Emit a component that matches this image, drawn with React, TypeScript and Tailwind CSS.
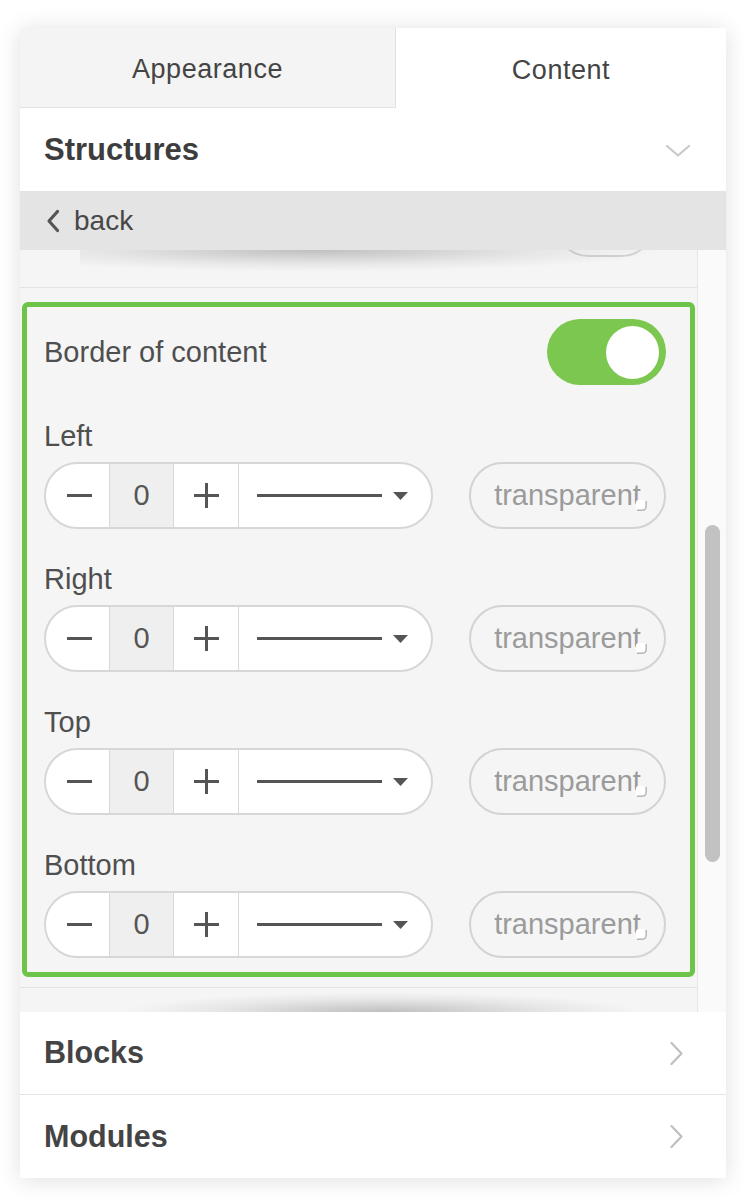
import React from "react";

function ChevronDown() {
  return (
    <svg width="26" height="14" viewBox="0 0 26 14" fill="none">
      <polyline points="2,2 13,11.5 24,2" stroke="#c9c9c9" strokeWidth="2.2" strokeLinecap="round" strokeLinejoin="round" />
    </svg>
  );
}

function ChevronRight() {
  return (
    <svg width="15" height="25" viewBox="0 0 15 25" fill="none">
      <polyline points="2.5,2 12.5,12.5 2.5,23" stroke="#bfbfbf" strokeWidth="2.2" strokeLinecap="round" strokeLinejoin="round" />
    </svg>
  );
}

function BackChevron() {
  return (
    <svg width="14" height="24" viewBox="0 0 14 24" fill="none">
      <polyline points="11.5,2.5 3,12 11.5,21.5" stroke="#555555" strokeWidth="3.2" strokeLinecap="round" strokeLinejoin="round" />
    </svg>
  );
}

function Caret() {
  return (
    <svg width="15" height="8" viewBox="0 0 15 8">
      <polygon points="0,0 15,0 7.5,8" fill="#555555" />
    </svg>
  );
}

function ResizeMark() {
  return (
    <svg width="14" height="16" viewBox="0 0 14 16" className="absolute right-[16px] bottom-[15px]">
      <rect x="2" y="4" width="9" height="10" rx="2.5" fill="#ffffff" />
      <path d="M3 14.2 H8 Q12.2 14.2 12.2 10 V5" fill="none" stroke="#b5b5b5" strokeWidth="1.4" />
    </svg>
  );
}

function BorderGroup({ label, first }: { label: string; first?: boolean }) {
  return (
    <div className={first ? "mt-[36px] flex flex-col" : "mt-[35px] flex flex-col"}>
      <div className="h-[30px] flex items-center text-[29px] leading-none text-[#4f4f4f]">{label}</div>
      <div className="mt-[11px] h-[67px] flex items-stretch justify-between">
        <div className="flex w-[389px] rounded-full border-2 border-[#d7d7d7] bg-white overflow-hidden">
          <div className="w-[64px] flex items-center justify-center border-r border-[#d9d9d9] pl-[4px]">
            <span className="block w-[25px] h-[3px] bg-[#555]" />
          </div>
          <div className="w-[64px] flex items-center justify-center border-r border-[#d9d9d9] bg-[#efefef] text-[29px] leading-none text-[#555]">
            0
          </div>
          <div className="w-[65px] flex items-center justify-center border-r border-[#d9d9d9]">
            <span className="relative block w-[25px] h-[25px]">
              <span className="absolute left-0 top-[11px] w-[25px] h-[3px] bg-[#555]" />
              <span className="absolute top-0 left-[11px] w-[3px] h-[25px] bg-[#555]" />
            </span>
          </div>
          <div className="flex-1 flex items-center pl-[18px] pr-[23px] gap-[11px]">
            <span className="flex-1 h-[3px] bg-[#555]" />
            <Caret />
          </div>
        </div>
        <div className="relative w-[197px] rounded-full border-2 border-[#d3d3d3] flex items-center justify-center text-[29px] leading-none text-[#9b9b9b]">
          transparent
          <ResizeMark />
        </div>
      </div>
    </div>
  );
}

export default function App() {
  return (
    <div className="min-h-[1200px] bg-white pt-[28px] pl-[20px] font-['Liberation_Sans',Arial,sans-serif]">
      <div className="w-[706px] h-[1150px] flex flex-col bg-white shadow-[0_2px_22px_rgba(0,0,0,0.13)]">
        {/* Tabs */}
        <div className="h-[80px] flex">
          <div className="w-[376px] flex items-center justify-center pt-[4px] bg-[#f4f4f4] border-b border-r border-[#e2e2e2] text-[27px] tracking-[0.02em] text-[#444]">
            Appearance
          </div>
          <div className="flex-1 flex items-center justify-center pt-[4px] bg-white text-[27px] tracking-[0.02em] text-[#444]">
            Content
          </div>
        </div>

        {/* Structures */}
        <div className="h-[83px] flex items-center justify-between pl-[24px] pr-[35px] pt-[2px] bg-white">
          <span className="text-[31px] font-bold text-[#3d3d3d]">Structures</span>
          <ChevronDown />
        </div>

        {/* Back bar */}
        <div className="relative z-10 h-[59px] flex items-center gap-[14px] pl-[26px] bg-[#e4e4e4]">
          <BackChevron />
          <span className="text-[28px] leading-none text-[#484848]">back</span>
          <div className="pointer-events-none absolute left-[60px] right-[60px] top-[59px] h-[22px] bg-[radial-gradient(ellipse_at_40%_0%,rgba(0,0,0,0.22),rgba(0,0,0,0.06)_45%,transparent_70%)]" />
        </div>

        {/* Scroll area */}
        <div className="relative h-[762px] flex bg-[#f5f5f5] overflow-hidden">
          <div className="flex-1 flex flex-col">
            <div className="h-[38px] overflow-hidden flex justify-end pr-[42px] border-b border-[#e3e3e3]">
              <div className="mt-[-60px] w-[100px] h-[67px] shrink-0 rounded-full border-2 border-[#d3d3d3] bg-[#f5f5f5]" />
            </div>

            <div className="mt-[14px] mx-[2px] rounded-[6px] border-[5px] border-[#6cc548] pt-[12px] pl-[17px] pr-[24px] pb-[14px] flex flex-col">
              <div className="h-[66px] flex items-center justify-between">
                <span className="text-[29px] leading-none text-[#4f4f4f]">Border of content</span>
                <div className="w-[119px] h-[66px] rounded-full bg-[#7bc74f] flex items-center justify-end pr-[7px]">
                  <span className="block w-[53px] h-[53px] rounded-full bg-white" />
                </div>
              </div>
              <BorderGroup label="Left" first />
              <BorderGroup label="Right" />
              <BorderGroup label="Top" />
              <BorderGroup label="Bottom" />
            </div>

            <div className="mt-[10px] border-b border-[#e3e3e3]" />
          </div>

          {/* scrollbar */}
          <div className="w-[29px] bg-[#fafafa] border-l border-[#e6e6e6] flex flex-col pl-[7px]">
            <div className="mt-[275px] w-[15px] h-[337px] rounded-full bg-[#c2c2c2]" />
          </div>

          <div className="pointer-events-none absolute left-[100px] right-[80px] bottom-0 h-[20px] bg-[radial-gradient(ellipse_at_50%_100%,rgba(0,0,0,0.22),rgba(0,0,0,0.06)_45%,transparent_70%)]" />
        </div>

        {/* Blocks */}
        <div className="h-[83px] flex items-center justify-between pl-[24px] pr-[42px] bg-white border-b border-[#e4e4e4]">
          <span className="text-[30.5px] font-bold text-[#444]">Blocks</span>
          <ChevronRight />
        </div>

        {/* Modules */}
        <div className="h-[83px] flex items-center justify-between pl-[24px] pr-[42px] bg-white">
          <span className="text-[30.5px] font-bold text-[#444]">Modules</span>
          <ChevronRight />
        </div>
      </div>
    </div>
  );
}
